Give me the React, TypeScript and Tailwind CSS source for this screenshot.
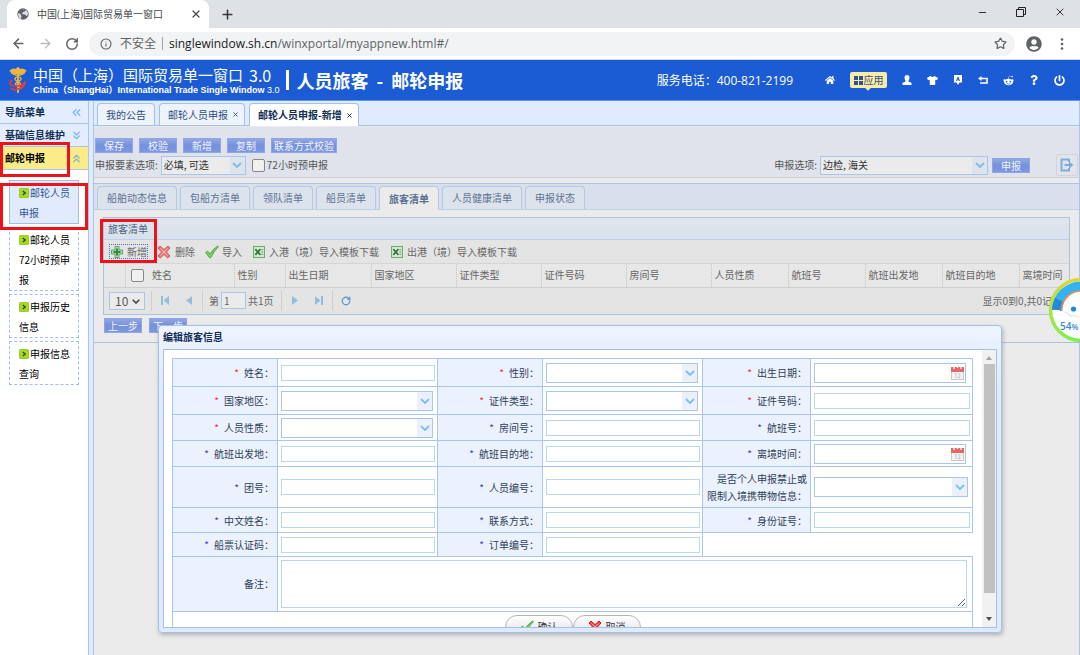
import type { ReactNode } from 'react'
import { FaHome, FaPowerOff, FaQuestion, FaRedditAlien, FaTshirt, FaUserCircle } from 'react-icons/fa'
import { ArrowLeft, ArrowRight, ChevronsDown, ChevronsLeft, ChevronsUp, Info, Minus, Plus, RotateCw, Star, X } from 'lucide-react'
import clsx from 'clsx'

type FieldKind = 'text' | 'select' | 'date'

interface Field {
  label: string
  kind: FieldKind
  mark?: 'red' | 'blue'
}

const FIELDS: Field[] = [
  { label: '姓名', kind: 'text', mark: 'red' },
  { label: '性别', kind: 'select', mark: 'red' },
  { label: '出生日期', kind: 'date', mark: 'red' },
  { label: '国家地区', kind: 'select', mark: 'red' },
  { label: '证件类型', kind: 'select', mark: 'red' },
  { label: '证件号码', kind: 'text', mark: 'red' },
  { label: '人员性质', kind: 'select', mark: 'red' },
  { label: '房间号', kind: 'text', mark: 'blue' },
  { label: '航班号', kind: 'text', mark: 'blue' },
  { label: '航班出发地', kind: 'text', mark: 'blue' },
  { label: '航班目的地', kind: 'text', mark: 'blue' },
  { label: '离境时间', kind: 'date', mark: 'blue' },
  { label: '团号', kind: 'text', mark: 'blue' },
  { label: '人员编号', kind: 'text', mark: 'blue' },
  { label: '是否个人申报禁止或\n限制入境携带物信息', kind: 'select' },
  { label: '中文姓名', kind: 'text', mark: 'blue' },
  { label: '联系方式', kind: 'text', mark: 'blue' },
  { label: '身份证号', kind: 'text', mark: 'blue' },
  { label: '船票认证码', kind: 'text', mark: 'blue' },
  { label: '订单编号', kind: 'text', mark: 'blue' },
]

const COLUMNS = [
  { title: '姓名', width: 'w-[85px]' },
  { title: '性别', width: 'w-[51px]' },
  { title: '出生日期', width: 'w-[86px]' },
  { title: '国家地区', width: 'w-[85px]' },
  { title: '证件类型', width: 'w-[85px]' },
  { title: '证件号码', width: 'w-[85px]' },
  { title: '房间号', width: 'w-[85px]' },
  { title: '人员性质', width: 'w-[77px]' },
  { title: '航班号', width: 'w-[77px]' },
  { title: '航班出发地', width: 'w-[77px]' },
  { title: '航班目的地', width: 'w-[77px]' },
  { title: '离境时间', width: '' },
]

const INNER_TABS = ['船舶动态信息', '包船方清单', '领队清单', '船员清单', '旅客清单', '人员健康清单', '申报状态']

function Chevron() {
  return (
    <svg viewBox="0 0 10 6" className="h-[6px] w-[10px]" fill="none" stroke="#7dbdec" strokeWidth="1.8">
      <path d="M1 1l4 4 4-4" />
    </svg>
  )
}

function Combo({ id, value, muted, className }: { id: string; value?: string; muted?: boolean; className?: string }) {
  return (
    <div className={clsx('relative border border-[#a9c6ea]', muted ? 'bg-[#ebebeb]' : 'bg-white', className)}>
      <select id={id} className="block h-full w-full appearance-none bg-transparent pl-[2px] text-[#333] outline-none">
        <option>{value ?? ''}</option>
      </select>
      <span
        className={clsx(
          'pointer-events-none absolute inset-y-0 right-0 flex w-[15px] items-center justify-center',
          muted ? 'bg-[#dfe4ec]' : 'bg-[#eaf1fd]',
        )}
      >
        <Chevron />
      </span>
    </div>
  )
}

function CalendarIcon() {
  return (
    <svg viewBox="0 0 13 14" className="h-[14px] w-[13px] shrink-0">
      <rect x="0.5" y="2" width="12" height="11.5" fill="#f3f3f3" stroke="#c9c9c9" />
      <rect y="1" width="13" height="5" fill="#ea6666" />
      <path d="M3 0v3M6.500 0v2M10 0v3" stroke="#fff" strokeWidth="1.2" />
      <path d="M4 8l1-.7V12M7 8.300q1.500-1.500 2 0t-2 3.200h2.500" fill="none" stroke="#bbb" strokeWidth="0.8" />
    </svg>
  )
}

function FieldCell({ field, index }: { field: Field; index: number }) {
  const id = `field-${index}`
  return (
    <>
      <label
        htmlFor={id}
        className="flex items-center justify-end border-r border-b border-[#a9c6ea] bg-[#ecf1fe] pr-[3px] text-right leading-[17px] whitespace-pre-line text-[#2d3f58]"
      >
        <span>
          {field.mark && (
            <span className={clsx('mr-[5px]', field.mark === 'red' ? 'text-red-500' : 'text-[#4433ee]')}>*</span>
          )}
          {`${field.label}：`}
        </span>
      </label>
      <div className="flex items-center border-r border-b border-[#a9c6ea] pl-[3px]">
        {field.kind === 'text' && (
          <input id={id} className="mr-[2px] h-[16px] w-full min-w-0 border border-[#bad8ec] bg-white outline-none" />
        )}
        {field.kind === 'select' && <Combo id={id} className="mr-[4px] h-[20px] w-full min-w-0" />}
        {field.kind === 'date' && (
          <div className="mr-[6px] flex h-[20px] w-full min-w-0 items-center border border-[#a9c6ea] bg-white pr-px">
            <input id={id} className="h-full w-full min-w-0 bg-white outline-none" />
            <CalendarIcon />
          </div>
        )}
      </div>
    </>
  )
}

function BlueButton({ children, wide }: { children: ReactNode; wide?: boolean }) {
  return (
    <button
      className={clsx(
        'h-[15px] shrink-0 border border-[#8ea6e2] bg-linear-to-b from-[#92a8e4] via-[#7590dd] to-[#7d97e0] leading-[13px] text-[#f0f3fc]',
        wide ? 'px-[2px]' : 'w-[38px]',
      )}
    >
      {children}
    </button>
  )
}

function PlusIcon() {
  return (
    <svg viewBox="0 0 14 14" className="size-[14px]">
      <path d="M5 1.500h4V5h3.500v4H9v3.500H5V9H1.500V5H5z" fill="#b4dcb0" stroke="#5fa562" />
      <path d="M7 3.500v7M3.500 7h7" stroke="#2f8a3d" strokeWidth="2" />
    </svg>
  )
}

function CrossIcon({ bright }: { bright?: boolean }) {
  return (
    <svg viewBox="0 0 14 14" className="size-[14px]">
      <path
        d="M3 1l4 3.600L11 1l2 2-3.600 4L13 11l-2.300 2L7 9.500 3.300 13 1 11l3.600-4L1 3z"
        fill={bright ? '#ef4b4b' : '#e88080'}
        stroke={bright ? '#c81d1d' : '#cf5656'}
      />
      <path d="M3.500 3.500l7 7M10.500 3.500l-7 7" stroke="#f8c4c4" strokeWidth="0.7" />
    </svg>
  )
}

function TickIcon() {
  return (
    <svg viewBox="0 0 14 14" className="size-[14px]">
      <path d="M.7 7.500l2-1.300L5 9q3-5 7.700-8l.8.6Q8.500 6.500 5.700 12.800H4.600z" fill="#7cd45a" stroke="#4a9a3c" strokeWidth="0.9" />
    </svg>
  )
}

function ExcelIcon() {
  return (
    <svg viewBox="0 0 13 13" className="size-[12px]">
      <rect x="0.6" y="0.6" width="11.800" height="11.800" fill="#dcebdc" stroke="#6fa974" strokeWidth="1.200" />
      <path d="M2.500 3.500l5.500 6M8 3.500l-5.500 6" stroke="#2f7a3a" strokeWidth="2" />
      <path d="M9 4h2M9 6.500h2M9 9h2" stroke="#4f9a56" />
    </svg>
  )
}

function ArrowBadge() {
  return (
    <svg viewBox="0 0 10 10" className="mr-px inline-block size-[10px] align-[-1px]">
      <rect x="0.300" y="0.300" width="9.400" height="9.400" rx="1.500" fill="#a5db1c" stroke="#78ad10" strokeWidth="0.6" />
      <path d="M3.800 3L6.200 5 3.800 7" fill="none" stroke="#264b0a" strokeWidth="1.300" />
    </svg>
  )
}

function BrowserBar() {
  return (
    <div className="border-b border-[#d5d7da] bg-white font-['Open_Sans','Noto_Sans_CJK_SC',sans-serif]">
      <div className="flex h-[28px] items-center bg-[#dee1e6] pl-[7px]">
        <div className="flex h-full w-[202px] items-center rounded-t-lg bg-white pl-[10px] text-[10px] text-[#45484d]">
          <svg viewBox="0 0 12 12" className="size-[12px]">
            <circle cx="6" cy="6" r="5.700" fill="#5f6368" />
            <path d="M1 5l2.500 1 1 2.500L4 11Q1 9.500 1 5M5 1l4 .5L8 3.500 6 4 5 6l3 .5L9.500 8 11 6.500Q11 1.500 6 1z" fill="#dfe1e5" />
          </svg>
          <span className="ml-[8px] whitespace-nowrap">中国(上海)国际贸易单一窗口</span>
          <button aria-label="关闭" className="mr-[7px] ml-auto">
            <X className="size-[12px]" strokeWidth={2.5} />
          </button>
        </div>
        <button aria-label="新标签页" className="ml-[11px] text-[#34373b]">
          <Plus className="size-[15px]" strokeWidth={2.4} />
        </button>
        <div className="mr-[14px] ml-auto flex items-center gap-[28px] pb-[4px] text-[#222]">
          <Minus className="size-[11px]" />
          <svg viewBox="0 0 10 10" className="size-[10px]" fill="none" stroke="#222">
            <path d="M.5 2.500h7v7h-7zM2.500 2.500v-2h7v7h-2" />
          </svg>
          <X className="size-[12px]" strokeWidth={1.800} />
        </div>
      </div>
      <div className="flex h-[31px] items-center pr-[16px] pl-[11px] text-[#5f6368]">
        <ArrowLeft className="size-[15px]" strokeWidth={2.400} />
        <ArrowRight className="ml-[12px] size-[15px] text-[#babcbe]" strokeWidth={2.200} />
        <RotateCw className="ml-[12px] size-[14px]" strokeWidth={2.600} />
        <div className="ml-[10px] flex h-[24px] flex-1 items-center rounded-full bg-[#f1f3f4] pr-[8px] pl-[11px] text-[12px]">
          <Info className="size-[12px]" strokeWidth={2.200} />
          <span className="ml-[8px]">不安全</span>
          <span className="mx-[6px] h-[13px] w-px bg-[#a0a3a7]" />
          <span>
            <span className="text-[#202124]">singlewindow.sh.cn</span>/winxportal/myappnew.html#/
          </span>
          <Star className="ml-auto size-[13px]" strokeWidth={2.200} />
        </div>
        <FaUserCircle className="ml-[11px] size-[16px]" />
        <svg viewBox="0 0 4 12" className="ml-[18px] h-[12px] w-[4px]" fill="#5f6368">
          <circle cx="2" cy="1.500" r="1.300" />
          <circle cx="2" cy="6" r="1.300" />
          <circle cx="2" cy="10.500" r="1.300" />
        </svg>
      </div>
    </div>
  )
}

function Logo() {
  return (
    <svg viewBox="0 0 20 28" className="h-[28px] w-[20px]" fill="none">
      <path d="M10 5C8 1.500 4 2 1 5c1 .3 1.500.6 1.800 1.200-.3 1 .5 1.600 1.700 1.500 0 1 1 1.600 2.500 1.300L10 8l3 1c1.500.3 2.500-.3 2.500-1.300 1.200.1 2-.5 1.700-1.500.3-.6.800-.9 1.800-1.200-3-3-7-3.500-9 0" fill="#f0b63c" />
      <circle cx="10" cy="3" r="1.800" fill="#f3c04a" />
      <path d="M10 6v21" stroke="#f0b63c" strokeWidth="1.800" />
      <path d="M7 9c6 2 8 4 4 6s-5 3-1 5 2 3-1 4M13 9c-6 2-8 4-4 6s5 3 1 5" stroke="#f0b63c" strokeWidth="1.300" />
      <path d="M4 14c-4 3-2 6 4 6s9-1 9-5M17 16c0 5-3 6-7 7s-6 1-7-1" stroke="#e43b3b" strokeWidth="1.700" />
    </svg>
  )
}

function AppHeader() {
  return (
    <header className="flex h-[41px] items-center border-b border-[#5f95e6] bg-[#1b5bd3] pr-[15px] pl-[8px] text-white">
      <Logo />
      <div className="ml-[5px] whitespace-nowrap">
        <div className="flex h-[20px] items-center text-[15px] leading-[18px]">
          中国（上海）国际贸易单一窗口<span className="ml-[6px] text-[16px]">3.0</span>
        </div>
        <div className="font-['Liberation_Sans','Noto_Sans_CJK_SC',sans-serif] text-[9px] leading-[11px] font-bold">
          China（ShangHai）International Trade Single Window <span className="font-normal">3.0</span>
        </div>
      </div>
      <div className="ml-[7px] h-[20px] w-[3px] bg-white" />
      <h1 className="ml-[7px] text-[18px] leading-[26px] font-bold whitespace-nowrap">
        人员旅客<span className="mx-[4px]"> - </span>邮轮申报
      </h1>
      <span className="ml-auto text-[12px] whitespace-nowrap">
        服务电话：<span className="font-['Open_Sans',sans-serif]">400-821-2199</span>
      </span>
      <nav className="ml-[32px] flex items-center gap-[15px]">
        <a href="#home" aria-label="首页"><FaHome className="size-[10px]" /></a>
        <a
          href="#apps"
          className="relative flex h-[16px] w-[37px] items-center justify-center gap-px rounded-xs bg-[#f8eba4] text-[10px] text-[#3a4f86]"
        >
          <svg viewBox="0 0 9 9" className="size-[9px]" fill="#33508f">
            <path d="M0 0h4v4H0zM5 0h4v4H5zM0 5h4v4H0zM5 5h4v4H5z" />
          </svg>
          应用
          <span className="absolute top-[14px] left-[16px] size-[4px] rotate-45 bg-[#f8eba4]" />
        </a>
        <a href="#user" aria-label="用户">
          <svg viewBox="0 0 10 10" className="size-[10px]" fill="#fff">
            <path d="M5 0q2.500 0 2.500 2.600Q7.300 5 6.200 6q.3 1 3.300 1.700V10h-9V7.700Q3.500 7 3.800 6 2.700 5 2.500 2.600 2.500 0 5 0" />
          </svg>
        </a>
        <a href="#theme" aria-label="皮肤"><FaTshirt className="size-[11px]" /></a>
        <a href="#message" aria-label="消息">
          <svg viewBox="0 0 10 10" className="size-[10px]">
            <path d="M1 0h8v7.500H6.500L5 10 3.500 7.500H1z" fill="#fff" />
            <path d="M3.500 6L5 2l1.500 4M4 4.800h2" stroke="#1b5bd3" fill="none" />
          </svg>
        </a>
        <a href="#back" aria-label="返回">
          <svg viewBox="0 0 10 10" className="size-[10px]">
            <path d="M3 3.500h6v4.500H2" fill="none" stroke="#fff" strokeWidth="1.600" />
            <path d="M0 3.500l3.500-2.500v5z" fill="#fff" />
          </svg>
        </a>
        <a href="#social" aria-label="社区"><FaRedditAlien className="size-[11px]" /></a>
        <a href="#help" aria-label="帮助"><FaQuestion className="size-[10px]" /></a>
        <a href="#logout" aria-label="退出"><FaPowerOff className="size-[11px]" /></a>
      </nav>
    </header>
  )
}

function Sidebar() {
  const entries = ['邮轮人员申报', '邮轮人员72小时预申报', '申报历史信息', '申报信息查询']
  return (
    <aside className="w-[89px] shrink-0 border-r border-[#a9c6ea] bg-white">
      <div className="flex h-[23px] items-center justify-between border-b border-[#a9c6ea] bg-[#e3edff] pr-[5px] pl-[5px] font-bold text-[#122e56]">
        导航菜单
        <ChevronsLeft className="size-[13px] text-[#7ab9ee]" strokeWidth={2.500} />
      </div>
      <div className="flex h-[23px] items-center justify-between border-b border-[#a9c6ea] bg-[#e3edff] pr-[5px] pl-[5px] font-bold whitespace-nowrap text-[#122e56]">
        基础信息维护
        <ChevronsDown className="size-[13px] text-[#7ab9ee]" strokeWidth={2.500} />
      </div>
      <div className="flex h-[23px] items-center justify-between border-b border-[#a9c6ea] bg-[#fbec88] pr-[5px] pl-[5px] font-bold text-black">
        邮轮申报
        <ChevronsUp className="size-[13px] text-[#8cb9c8]" strokeWidth={2.500} />
      </div>
      <nav className="flex flex-col gap-[3px] px-[9px] pt-[10px]">
        {entries.map((entry, i) => (
          <a
            key={entry}
            href="#entry"
            className={clsx(
              'block border pt-[2px] pr-[6px] pl-[9px] leading-[20px] break-all',
              i === 0 ? 'border-[#a3bfe8] bg-[#e1ebfd] text-[#2f5794]' : 'border-dashed border-[#a3bfe8] text-black',
            )}
          >
            <ArrowBadge />
            {entry}
          </a>
        ))}
      </nav>
    </aside>
  )
}

function PassengerPanel() {
  return (
    <section className="mx-[9px] mt-[7px] overflow-hidden border border-[#adc2de] bg-[#e4e4e4] text-[#666]">
      <h2 className="h-[22px] border-b border-[#bcd0ea] bg-linear-to-b from-[#e1e5ed] to-[#d8e1ed] pl-[4px] leading-[22px] text-[#4a5f80]">
        旅客清单
      </h2>
      <div className="flex h-[24px] items-center border-b border-[#d5d5d5] pl-[5px] whitespace-nowrap">
        <button className="flex h-[15px] items-center gap-[3px] border border-dotted border-[#4f6fd0]">
          <PlusIcon /> 新增
        </button>
        <button className="ml-[9px] flex items-center gap-[4px]">
          <CrossIcon /> 删除
        </button>
        <button className="ml-[10px] flex items-center gap-[3px]">
          <TickIcon /> 导入
        </button>
        <button className="ml-[11px] flex items-center gap-[4px]">
          <ExcelIcon /> 入港（境）导入模板下载
        </button>
        <button className="ml-[12px] flex items-center gap-[4px]">
          <ExcelIcon /> 出港（境）导入模板下载
        </button>
      </div>
      <table className="w-full table-fixed">
        <thead>
          <tr className="h-[23px] border-b border-[#cfcfcf] bg-[#e7e7e7]">
            <th className="w-[21px] border-r border-dotted border-[#c4c4c4]" />
            <th className="w-[24px] p-0">
              <input
                type="checkbox"
                aria-label="全选"
                className="mx-auto block size-[13px] appearance-none rounded-xs border border-[#888] bg-[#f0f0f0]"
              />
            </th>
            {COLUMNS.map(({ title, width }) => (
              <th
                key={title}
                className={clsx('border-r border-dotted border-[#c4c4c4] p-0 pl-[3px] text-left font-normal whitespace-nowrap last:border-r-0', width)}
              >
                {title}
              </th>
            ))}
          </tr>
        </thead>
      </table>
      <div className="flex h-[26px] items-center pl-[5px] whitespace-nowrap">
        <div className="relative h-[18px] w-[36px] border border-[#a9c6ea] bg-[#ebebeb]">
          <select aria-label="每页条数" className="block h-full w-full appearance-none pl-[5px] text-[12px] leading-[16px] text-[#555] outline-none">
            <option>10</option>
          </select>
          <svg viewBox="0 0 8 5" className="pointer-events-none absolute top-[6px] right-[4px] h-[5px] w-[8px]" fill="none" stroke="#444" strokeWidth="1.600">
            <path d="M.7.700L4 4 7.300.700" />
          </svg>
        </div>
        <span className="ml-[6px] h-[20px] w-px bg-[#cfcfcf]" />
        <button aria-label="首页" className="ml-[9px]">
          <svg viewBox="0 0 8 9" className="h-[9px] w-[8px]" fill="#92bde0"><path d="M0 0h2v9H0zM8 0v9L2.500 4.500z" /></svg>
        </button>
        <button aria-label="上一页" className="ml-[17px]">
          <svg viewBox="0 0 6 9" className="h-[9px] w-[6px]" fill="#92bde0"><path d="M6 0v9L0 4.500z" /></svg>
        </button>
        <span className="ml-[10px] h-[20px] w-px bg-[#cfcfcf]" />
        <label htmlFor="page" className="mr-[2px] ml-[6px]">第</label>
        <input id="page" defaultValue="1" className="h-[17px] w-[25px] border border-[#a9c6ea] bg-[#ebebeb] pl-[2px] outline-none" />
        <span className="ml-[2px]">共1页</span>
        <span className="ml-[7px] h-[20px] w-px bg-[#cfcfcf]" />
        <button aria-label="下一页" className="ml-[10px]">
          <svg viewBox="0 0 6 9" className="h-[9px] w-[6px]" fill="#92bde0"><path d="M0 0v9l6-4.500z" /></svg>
        </button>
        <button aria-label="末页" className="ml-[17px]">
          <svg viewBox="0 0 8 9" className="h-[9px] w-[8px]" fill="#92bde0"><path d="M6 0h2v9H6zM0 0v9l5.500-4.500z" /></svg>
        </button>
        <span className="ml-[9px] h-[20px] w-px bg-[#cfcfcf]" />
        <button aria-label="刷新" className="ml-[8px] text-[#5e9bcd]">
          <RotateCw className="size-[10px]" strokeWidth={3.200} />
        </button>
        <span className="mr-[7px] ml-auto">显示0到0,共0记录</span>
      </div>
    </section>
  )
}

function Workspace() {
  const tab = 'flex items-center gap-[4px] rounded-t-[4px] border border-b-0 border-[#a3c1e6] pl-[8px]'
  return (
    <main className="ml-[4px] flex min-w-0 flex-1 flex-col border-x border-[#a9c6ea] bg-[#ebebeb]">
      <div className="flex h-[25px] items-end gap-[4px] border-b border-[#a3c1e6] bg-[#e0ebff] px-[3px] whitespace-nowrap">
        <button className={clsx(tab, 'h-[22px] bg-[#edf3ff] pr-[8px] text-[#2f4d7e]')}>我的公告</button>
        <button className={clsx(tab, 'h-[22px] bg-[#edf3ff] pr-[5px] text-[#2f4d7e]')}>
          邮轮人员申报 <X className="size-[7px]" strokeWidth={3} />
        </button>
        <button className={clsx(tab, '-mb-px h-[23px] bg-white pr-[5px] font-bold text-[#122e56]')}>
          邮轮人员申报-新增 <X className="size-[7px]" strokeWidth={3} />
        </button>
      </div>
      <div className="mt-px flex h-[51px] flex-col border-b border-[#cfcfd3] bg-[#e0e3eb] pt-[11px] pr-px pl-px text-[#555]">
        <div className="flex gap-[6px]">
          <BlueButton>保存</BlueButton>
          <BlueButton>校验</BlueButton>
          <BlueButton>新增</BlueButton>
          <BlueButton>复制</BlueButton>
          <BlueButton wide>联系方式校验</BlueButton>
        </div>
        <div className="mt-px flex h-[22px] items-center whitespace-nowrap">
          <label htmlFor="elements">申报要素选项:</label>
          <Combo id="elements" value="必填, 可选" muted className="ml-[3px] h-[19px] w-[85px]" />
          <label className="ml-[6px] flex items-center gap-[2px]">
            <input type="checkbox" className="size-[13px] appearance-none rounded-xs border border-[#888] bg-[#f0f0f0]" />
            72小时预申报
          </label>
          <label htmlFor="targets" className="mr-[3px] ml-auto">申报选项:</label>
          <Combo id="targets" value="边检, 海关" muted className="mr-[4px] h-[19px] w-[168px]" />
          <BlueButton>申报</BlueButton>
          <button aria-label="退出" className="ml-[26px] flex size-[22px] items-center justify-center rounded-xs border border-[#d0d4da] bg-[#e2e4e8]">
            <svg viewBox="0 0 14 14" className="size-[14px]" fill="none" stroke="#79aede" strokeWidth="2">
              <path d="M9 4V1.500H1.500v11H9V10" />
              <path d="M4.500 7H10" />
              <path d="M9 3.500L13.500 7 9 10.500z" fill="#79aede" stroke="none" />
            </svg>
          </button>
        </div>
      </div>
      <div className="mt-[5px] border-y border-[#adc2de] pb-[9px]">
        <div className="flex h-[26px] items-end gap-[3px] border-b border-[#bcd0ea] bg-[#d9e0eb] pl-[3px] whitespace-nowrap">
          {INNER_TABS.map((name) => (
            <button
              key={name}
              className={clsx(
                'rounded-t-[4px] border border-b-0 border-[#b4c9e6] px-[9px] text-[#5a7193]',
                name === '旅客清单' ? '-mb-px h-[24px] bg-[#ebebeb] font-bold' : 'h-[23px] bg-[#dde3ed]',
              )}
            >
              {name}
            </button>
          ))}
        </div>
        <PassengerPanel />
        <div className="mt-[3px] flex gap-[7px] pl-[10px]">
          <BlueButton>上一步</BlueButton>
          <BlueButton>下一步</BlueButton>
        </div>
      </div>
    </main>
  )
}

function PassengerDialog() {
  const action =
    'flex h-[24px] w-[68px] items-center justify-center gap-[4px] rounded-full border border-[#b4b4b4] bg-linear-to-b from-white to-[#dcdcdc] text-[#333]'
  return (
    <div
      role="dialog"
      aria-labelledby="dialog-title"
      className="absolute top-[325px] right-[78px] left-[158px] flex h-[308px] flex-col rounded-[4px] border border-[#a3c1e9] bg-linear-to-b from-[#eef4ff] to-[#e0eafc] to-20% px-[4px] pb-[4px] shadow-[1px_2px_4px_rgba(0,0,0,0.25)]"
    >
      <h2 id="dialog-title" className="h-[23px] shrink-0 leading-[22px] font-bold text-[#122e56]">编辑旅客信息</h2>
      <div className="flex min-h-0 flex-1 border border-[#a3c1e9] bg-white">
        <form className="flex-1 overflow-hidden pt-[8px] pr-[9px] pl-[8px]">
          <div className="grid grid-cols-[105fr_160fr_105fr_160fr_108fr_162fr] grid-rows-[28px_28px_26px_26px_41px_25px_24px_55px_40px] border-t border-l border-[#a9c6ea]">
            {FIELDS.map((field, i) => (
              <FieldCell key={field.label} field={field} index={i} />
            ))}
            <div className="col-span-2 border-b border-[#a9c6ea]" />
            <label htmlFor="remark" className="flex items-center justify-end border-r border-b border-[#a9c6ea] bg-[#ecf1fe] pr-[3px] text-[#2d3f58]">
              备注：
            </label>
            <div className="col-span-5 border-r border-b border-[#a9c6ea] py-[3px] pr-[5px] pl-[3px]">
              <textarea id="remark" className="block h-full w-full border border-[#bad8ec] bg-white outline-none" />
            </div>
            <div className="col-span-6 flex justify-center border-r border-[#a9c6ea] pt-[3px]">
              <button type="button" className={action}>
                <TickIcon /> 确认
              </button>
              <button type="button" className={action}>
                <CrossIcon bright /> 取消
              </button>
            </div>
          </div>
        </form>
        <div className="flex w-[14px] flex-col items-center bg-[#f1f1f1]">
          <svg viewBox="0 0 6 4" className="mt-[6px] mb-[4px] h-[4px] w-[6px]" fill="#a3a3a3"><path d="M3 0l3 4H0z" /></svg>
          <div className="w-[11px] flex-1 bg-[#c1c1c1]" />
          <svg viewBox="0 0 6 4" className="mt-[24px] mb-[6px] h-[4px] w-[6px]" fill="#505050"><path d="M0 0h6L3 4z" /></svg>
        </div>
      </div>
    </div>
  )
}

// floating speed ball, half hidden by the right edge
function SpeedBall() {
  return (
    <div className="absolute top-[277px] right-0 h-[66px] w-[32px] overflow-hidden">
      <svg viewBox="0 0 32 66" className="h-[66px] w-[32px]">
        <defs>
          <linearGradient id="ring" x1="0" y1="0" x2="0" y2="1">
            <stop offset="0" stopColor="#d8d838" />
            <stop offset="1" stopColor="#7cf04a" />
          </linearGradient>
        </defs>
        <circle cx="33" cy="33" r="30.500" fill="#fff" stroke="url(#ring)" strokeWidth="3.500" />
        <path d="M4 33a29 29 0 0 1 29-28.500V14A20 20 0 0 0 14 34q-5-2-10-1" fill="#34b3f1" />
        <path d="M4 33a29 29 0 0 1 3-12l9 4q-2 4-2 9-5-2-10-1" fill="#2389dc" />
        <path d="M13.500 34A19.500 19.500 0 0 1 33 14" fill="none" stroke="#f08a4a" strokeWidth="1.600" />
        <circle cx="25.500" cy="32" r="2.600" fill="#1c87dc" />
        <path d="M14 35q6-1 9 3 5-1 9 2v1q-5-3-10-1-3-4-8-5z" fill="#e8eef4" />
      </svg>
      <span className="absolute top-[42px] left-[12px] font-['Open_Sans',sans-serif] text-[10px] leading-[14px] font-semibold whitespace-nowrap text-[#3b8cc9]">
        54<span className="text-[8px]">%</span>
      </span>
    </div>
  )
}

export default function App() {
  return (
    <div className="relative flex min-h-screen flex-col overflow-hidden bg-[#e0ebff] font-['Noto_Sans_CJK_SC','Liberation_Sans',sans-serif] text-[10px] leading-[14px]">
      <BrowserBar />
      <AppHeader />
      <div className="flex flex-1">
        <Sidebar />
        <Workspace />
      </div>
      <PassengerDialog />
      <SpeedBall />
      <div className="pointer-events-none absolute top-[142px] left-0 h-[35px] w-[70px] border-3 border-[#ec141c]" />
      <div className="pointer-events-none absolute top-[183px] left-0 h-[47px] w-[88px] border-3 border-[#ec141c]" />
      <div className="pointer-events-none absolute top-[219px] left-[100px] h-[44px] w-[57px] border-3 border-[#ec141c]" />
    </div>
  )
}
